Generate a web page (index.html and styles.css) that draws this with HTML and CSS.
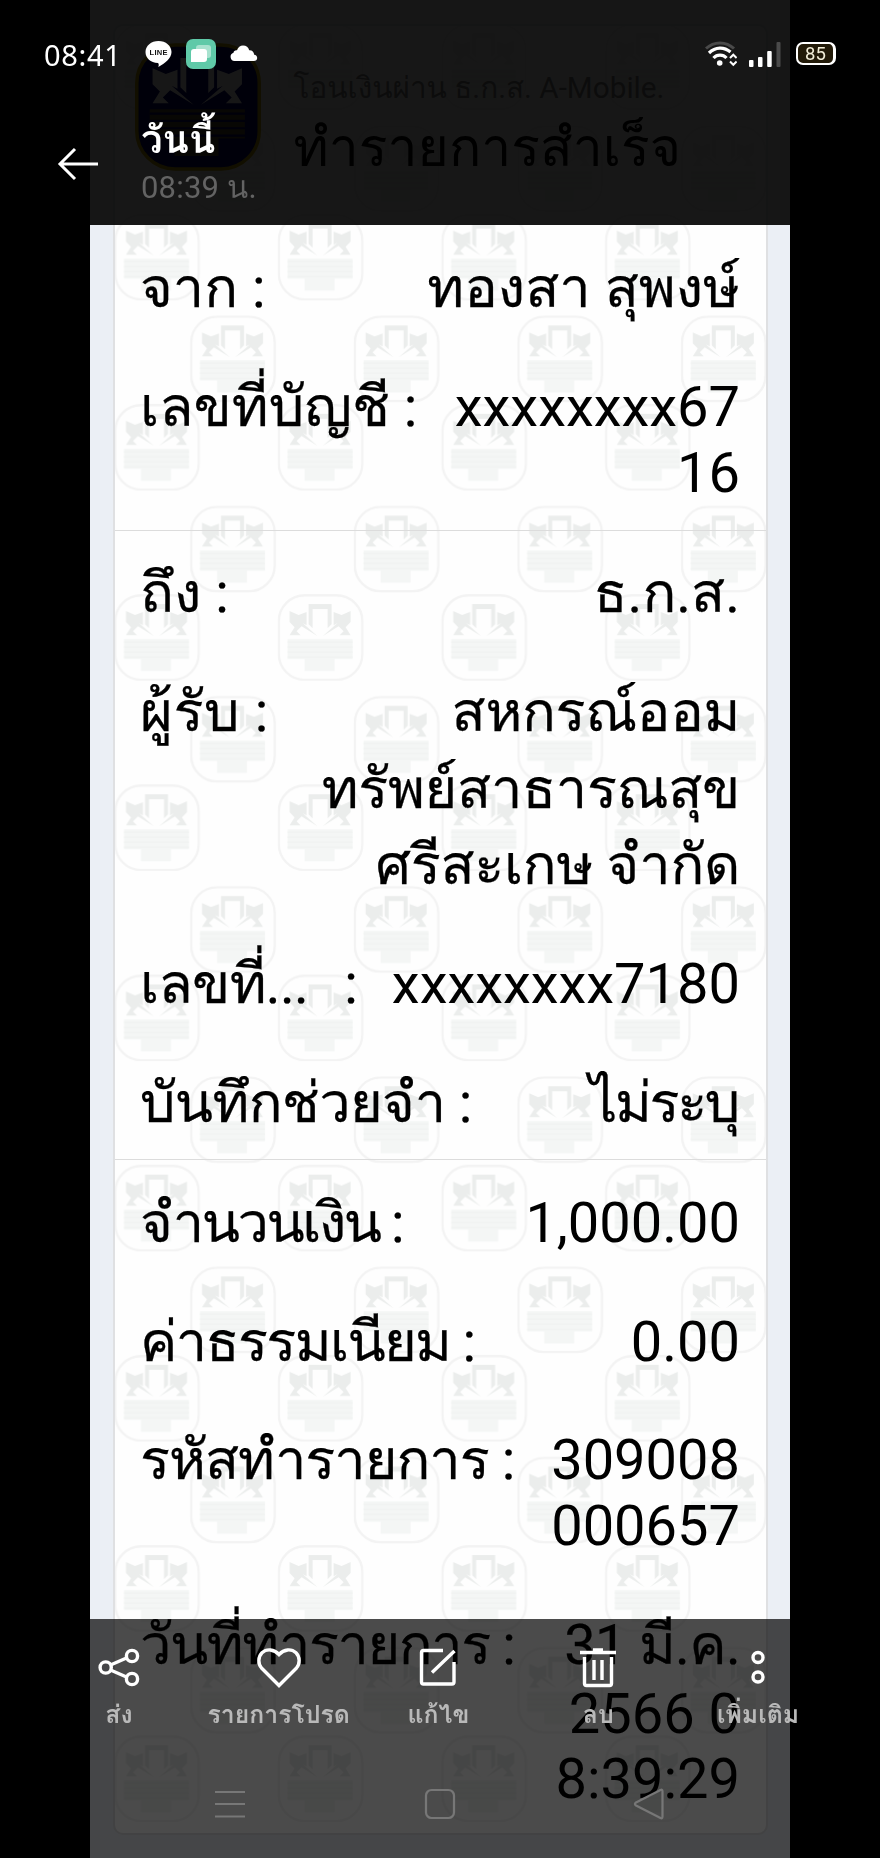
FILE: index.html
```html
<!DOCTYPE html>
<html lang="th">
<head>
  <meta charset="UTF-8">
  <title>วันนี้ 08:39 น.</title>
  <meta name="viewport" content="width=device-width, initial-scale=1.0">
  <link rel="stylesheet" href="styles.css">
</head>
<body>
  <!-- shared emblem -->
  <svg class="defs" width="0" height="0">
    <symbol id="emblem" viewBox="0 0 86 87">
      <rect class="em-frame" x="1.2" y="1.2" width="83.6" height="84.6" rx="26"/>
      <path class="em-main" d="M31 30V10h23v20l-4 4V15H35v19z"/>
      <path class="em-main" d="M12 17l9 4 8-3v13l-4-2 15 13-16-10-5 5 4 4H12l5-8-5-5zM73 17l-9 4-8-3v13l4-2-15 13 16-10 5 5-4 4h11l-5-8 5-5z"/>
      <path class="em-lines" d="M10 45h65v20H57v12H27V65H10z"/>
      <path class="em-rule" d="M10 48h65M10 53h65M10 58h65M10 63h65"/>
    </symbol>
  </svg>

  <!-- photo -->
  <main class="photo">
    <div class="receipt">
      <svg class="watermark" width="100%" height="100%">
        <defs>
          <pattern id="tiles" x="-1.500" y="-2.500" width="163.6" height="190.2" patternUnits="userSpaceOnUse">
            <use href="#emblem" x="0.5" y="0" width="86" height="87"/>
            <use href="#emblem" x="76.5" y="101.7" width="86" height="87"/>
          </pattern>
        </defs>
        <rect width="100%" height="100%" fill="url(#tiles)"/>
      </svg>

      <div class="receipt-head">
        <svg class="bank-logo" width="126" height="130"><use href="#emblem" width="126" height="130"/></svg>
        <div>
          <div class="receipt-channel">โอนเงินผ่าน ธ.ก.ส. A-Mobile.</div>
          <div class="receipt-result">ทำรายการสำเร็จ</div>
        </div>
      </div>

      <div class="section section-from">
        <div class="row"><div class="label">จาก :</div><div class="value thai">ทองสา สุพงษ์</div></div>
        <div class="row"><div class="label">เลขที่บัญชี :</div><div class="value number">xxxxxxxx67<br>16</div></div>
      </div>

      <div class="section">
        <div class="row"><div class="label">ถึง :</div><div class="value thai">ธ.ก.ส.</div></div>
        <div class="row"><div class="label label-receiver">ผู้รับ :</div><div class="value thai receiver">สหกรณ์ออม<br>ทรัพย์สาธารณสุข<br>ศรีสะเกษ จำกัด</div></div>
        <div class="row"><div class="label label-short"><span>เลขที่...</span><span>:</span></div><div class="value">xxxxxxxx7180</div></div>
        <div class="row"><div class="label label-memo">บันทึกช่วยจำ :</div><div class="value thai memo">ไม่ระบุ</div></div>
      </div>

      <div class="section">
        <div class="row"><div class="label label-amount">จำนวนเงิน :</div><div class="value">1,000.00</div></div>
        <div class="row"><div class="label label-fee">ค่าธรรมเนียม :</div><div class="value">0.00</div></div>
        <div class="row"><div class="label label-code">รหัสทำรายการ :</div><div class="value number">309008<br>000657</div></div>
        <div class="row"><div class="label label-date">วันที่ทำรายการ :</div><div class="value"><span class="month">31 มี.ค.</span><div class="number date-rest">2566 0<br>8:39:29</div></div></div>
      </div>
    </div>
  </main>

  <!-- top overlay -->
  <header class="topbar">
    <div class="shade"></div>
    <div class="status">
      <span class="clock">08:41</span>
      <svg class="ic-line" width="27" height="26" viewBox="0 0 27 26">
        <path fill="#fff" d="M13.5 0C20.800 0 26.500 4.800 26.500 11c0 6.500-6.500 11-13.200 15 .6-1.500.7-3-.3-3.900C5.500 21.800.5 17 .5 11 .5 4.800 6.200 0 13.500 0z"/>
        <text x="13.500" y="14" text-anchor="middle" textLength="18">LINE</text>
      </svg>
      <svg class="ic-app" width="30" height="30" viewBox="0 0 30 30">
        <rect width="30" height="30" rx="7" fill="#5fc9a8"/>
        <rect x="10" y="6" width="15" height="13" rx="3" fill="#a8e2cf"/>
        <path fill="#fff" d="M8 10h10a3 3 0 0 1 3 3v7a3 3 0 0 1-3 3H5V13a3 3 0 0 1 3-3z"/>
      </svg>
      <svg class="ic-cloud" width="28" height="17" viewBox="0 0 28 17">
        <path fill="#fff" d="M4.500 16a4.200 4.200 0 0 1-1-8.200C3.600 6 5.300 5 7 5.300 8 2.200 10.200.5 13 .5c3.200 0 5.500 2 6.200 4.800 2.800-.2 4.800 1.700 5 4.400 1.800.2 3 1.500 3 3.300 0 1.800-1.400 3-3.400 3z"/>
      </svg>
      <svg class="ic-wifi" width="32" height="26" viewBox="0 0 32 26" fill="none">
        <path stroke="#4a4a4a" stroke-width="3" d="M1 7.500C9 0 21 0 29 7.500"/>
        <path stroke="#fff" stroke-width="3.200" d="M4 12C10.500 5.600 19 5.600 25.500 11M8.500 17c3.500-3.800 9.500-3.800 13 0"/>
        <circle cx="14.700" cy="22" r="2.800" fill="#fff"/>
        <path stroke="#fff" stroke-width="2" d="m25 17 3.300-3.300 3.300 3.300M25 20.500l3.300 3.300 3.300-3.300"/>
      </svg>
      <svg class="ic-signal" width="32" height="26" viewBox="0 0 32 26" fill="#fff">
        <rect x="0" y="18" width="4.500" height="7" rx="1"/>
        <rect x="9" y="15" width="4.500" height="10" rx="1"/>
        <rect x="18.200" y="9" width="4.500" height="16" rx="1"/>
        <rect x="27.500" y="0" width="4" height="25" rx="1" fill="#4a4a4a"/>
      </svg>
      <div class="battery">85</div>
    </div>
    <div class="titlebar">
      <svg width="42" height="34" viewBox="0 0 42 34" fill="none" stroke="#fff" stroke-width="3">
        <path d="M2.500 17H41M18 2 3 17l15 15"/>
      </svg>
      <div>
        <div class="day">วันนี้</div>
        <div class="time">08:39 น.</div>
      </div>
    </div>
  </header>

  <!-- bottom overlay -->
  <footer class="bottombar">
    <div class="shade"></div>
    <div class="actions">
      <div class="action">
        <svg width="42" height="42" viewBox="0 0 42 42">
          <path d="M12.500 18 28.500 11M12.500 23l16 7"/><circle cx="7.700" cy="20.500" r="5.600"/><circle cx="34" cy="9" r="5.600"/><circle cx="34" cy="32" r="5.600"/>
        </svg>
        <span>ส่ง</span>
      </div>
      <div class="action">
        <svg width="44" height="42" viewBox="0 0 44 42">
          <path d="M22 38.500 4.500 21C1 17 .8 10 5 5.800c4.700-4.400 12-3.800 17 1.700 5-5.500 12.300-6.100 17-1.700 4.200 4.200 4 11.200.5 15.200z"/>
        </svg>
        <span>รายการโปรด</span>
      </div>
      <div class="action">
        <svg width="42" height="42" viewBox="0 0 42 42">
          <path d="M26 3.500H6.500Q4.500 3.500 4.500 5.500V35Q4.500 37 6.500 37H35Q37 37 37 35V15M15 25.500 37.500 4"/>
        </svg>
        <span>แก้ไข</span>
      </div>
      <div class="action">
        <svg width="42" height="42" viewBox="0 0 42 42">
          <path d="M3 5.500h36M16 3h10M7.500 10v26.500q0 2 2 2h23q2 0 2-2V10M17 13v20M25 13v20"/>
        </svg>
        <span>ลบ</span>
      </div>
      <div class="action">
        <svg width="42" height="42" viewBox="0 0 42 42">
          <circle cx="21" cy="10.500" r="5"/><circle cx="21" cy="30" r="5"/>
        </svg>
        <span>เพิ่มเติม</span>
      </div>
    </div>
    <div class="navkeys">
      <svg width="32" height="32" viewBox="0 0 32 32"><path d="M1 4h30M1 16h30M1 28.500h30"/></svg>
      <svg width="32" height="32" viewBox="0 0 32 32"><rect x="2" y="2" width="28" height="28" rx="5.500"/></svg>
      <svg width="32" height="32" viewBox="0 0 32 32"><path d="M3 14.500 27.500 2q2-1 2 1.500v25q0 2.500-2 1.500L3 17.500Q.8 16 3 14.500z"/></svg>
    </div>
  </footer>
</body>
</html>
```

FILE: styles.css
```css
body {
  margin: 0;
  height: 1858px;
  background: #000;
  color: #000;
  font-family: Roboto, Loma, "Noto Sans Thai Looped", serif;
  overflow: hidden;
}
.defs { position: absolute; }
svg { display: block; flex: none; }

/* emblem */
.em-frame { fill: var(--em-bg); stroke: var(--em-frame); stroke-width: 2.4; }
.em-main { fill: var(--em-main); }
.em-lines { fill: var(--em-lines); }
.em-rule { fill: none; stroke: var(--em-rule); stroke-width: 1.5; }

/* photo */
.photo {
  box-sizing: border-box;
  height: 1858px;
  margin: 0 90px;
  padding: 24px 22.5px 0;
  background: #ebeff5;
}
.receipt {
  box-sizing: border-box;
  position: relative;
  height: 1811px;
  border: 2px solid #dfe0e2;
  border-radius: 10px;
  background: #fefefe;
  overflow: hidden;
}
.watermark {
  position: absolute;
  inset: 0;
  --em-bg: transparent;
  --em-frame: #f3f3f3;
  --em-main: #ebedec;
  --em-lines: #f4f6f5;
  --em-rule: #f1f3f2;
}
.receipt-head {
  position: relative;
  display: flex;
  gap: 33px;
  height: 206.300px;
  padding: 16px 25px 0 20px;
  box-sizing: border-box;
}
.bank-logo {
  --em-bg: #00006c;
  --em-frame: #c8a800;
  --em-main: #fff;
  --em-lines: #5a5030;
  --em-rule: #00006c;
}
.receipt-channel { margin-top: 26px; font-size: 29.700px; line-height: 40px; color: #888; }
.receipt-result { margin-top: 2px; font-size: 53.500px; line-height: 76.600px; white-space: nowrap; }
.section {
  position: relative;
  display: grid;
  row-gap: 42.100px;
  padding: 24.500px 25.500px 18.200px;
  border-top: 1.600px solid #dcdcdc;
  font-size: 56px;
  line-height: 76.600px;
}
.section-from { padding-top: 18px; border-top: 0; }
.row {
  display: flex;
  justify-content: space-between;
  align-items: baseline;
  white-space: nowrap;
}
.value { text-align: right; }
.label, .thai, .month { -webkit-text-stroke: 0.25px #000; }
.label-receiver { letter-spacing: 0.600px; }
.label-short { display: flex; width: 217px; justify-content: space-between; letter-spacing: -0.700px; }
.label-memo { letter-spacing: -0.700px; }
.label-amount { letter-spacing: -2.500px; }
.label-fee { letter-spacing: -1.700px; }
.label-code { letter-spacing: -1.050px; }
.label-date { letter-spacing: -1.500px; }
.receiver { letter-spacing: -0.350px; }
.memo { letter-spacing: -2.400px; padding-right: 2px; }
.month { letter-spacing: -0.700px; }
.number { line-height: 65.600px; padding-bottom: 5.500px; }
.date-rest { margin-top: -2px; }

/* top overlay */
.topbar, .bottombar {
  position: fixed;
  left: 0;
  right: 0;
}
.topbar { top: 0; height: 225px; }
.bottombar { top: 1618.500px; bottom: 0; }
.shade { position: absolute; inset: 0; }
.topbar .shade { background: rgba(0, 0, 0, 0.908); }
.bottombar .shade { background: rgba(0, 0, 0, 0.705); }
.status {
  position: relative;
  display: flex;
  align-items: flex-start;
  height: 88px;
  padding: 38px 43px 0 44px;
  box-sizing: border-box;
  color: #fff;
}
.clock { width: 101px; font: 29px/34px "Noto Sans", sans-serif; letter-spacing: 0.700px; }
.ic-line { margin-top: 3px; }
.ic-line text { font: bold 7.500px "Liberation Sans", sans-serif; fill: #111; }
.ic-app { margin: 1px 0 0 14px; }
.ic-cloud { margin: 7px 0 0 14px; }
.ic-wifi { margin: 3px 0 0 auto; }
.ic-signal { margin: 4px 0 0 12px; }
.battery {
  margin: 4px 1px 0 15px;
  width: 40px;
  height: 23px;
  box-sizing: border-box;
  border: 2px solid #fff;
  border-right-width: 3px;
  border-radius: 7px;
  background: #221a08;
  color: #f3eed8;
  font-size: 18.500px;
  line-height: 20px;
  text-align: center;
}
.titlebar {
  position: relative;
  display: flex;
  gap: 42px;
  padding-left: 57px;
  color: #fff;
}
.titlebar svg { margin-top: 58.500px; }
.day { margin-top: 27px; font-size: 38.500px; line-height: 50px; font-weight: 700; }
.time { margin-top: 1px; font-size: 31px; line-height: 44px; letter-spacing: 0.200px; color: #636363; }

/* bottom overlay */
.actions {
  position: relative;
  display: flex;
  padding: 28px 42px 0 39px;
}
.action {
  flex: 1;
  display: flex;
  flex-direction: column;
  align-items: center;
  color: #b9b9b9;
  font-size: 24.800px;
  font-weight: 700;
  line-height: 34px;
  white-space: nowrap;
}
.action svg {
  height: 42px;
  margin-bottom: 9px;
  fill: none;
  stroke: #fff;
  stroke-width: 3.400;
}
.navkeys {
  position: relative;
  display: flex;
  justify-content: space-between;
  margin-top: 56px;
  padding: 0 215px 0 214px;
}
.navkeys svg {
  fill: none;
  stroke: #777;
  stroke-width: 2.200;
}
```
